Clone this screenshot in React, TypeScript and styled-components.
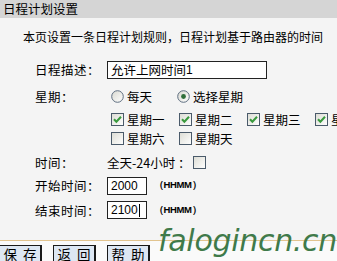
import React from "react";
import styled, { createGlobalStyle } from "styled-components";

const GlobalStyle = createGlobalStyle`
  html, body {
    margin: 0;
    padding: 0;
    background: #f4f4f4;
  }
  body {
    font-family: "Noto Sans CJK SC", "DejaVu Sans", sans-serif;
    color: #000;
  }
`;

const Page = styled.div`
  position: relative;
  width: 337px;
  height: 261px;
  overflow: hidden;
  background: #f4f4f4;
`;

const Header = styled.div`
  height: 18px;
  line-height: 17px;
  padding-left: 3px;
  background: #d5d5d5;
  font-size: 12.5px;
`;

const Intro = styled.div`
  height: 38px;
  line-height: 38px;
  padding-left: 23px;
  font-size: 12px;
  white-space: nowrap;
`;

const Row = styled.div<{ $h: number }>`
  display: grid;
  grid-template-columns: 72px 1fr;
  align-items: center;
  height: ${(p) => p.$h}px;
  padding-left: 35px;
  font-size: 12.5px;
  white-space: nowrap;
`;

const Label = styled.span`
  letter-spacing: 0.5px;
`;

const Value = styled.div`
  display: flex;
  align-items: center;
`;

const TextInput = styled.div<{ $w: number }>`
  box-sizing: border-box;
  width: ${(p) => p.$w}px;
  height: 18px;
  border: 1px solid #222;
  background: #fff;
  padding-left: 3px;
  font-size: 12.5px;
  line-height: 16px;
  display: flex;
  align-items: center;
`;

const NumText = styled.span`
  font-family: "Liberation Sans", Arial, sans-serif;
  font-size: 12px;
`;

const Caret = styled.span`
  display: inline-block;
  width: 1px;
  height: 13px;
  background: #000;
  margin-left: 1px;
`;

const Hint = styled.span`
  margin-left: 7px;
  font-family: "Liberation Sans", Arial, sans-serif;
  font-size: 9.5px;
  font-weight: bold;
  letter-spacing: -0.4px;
`;

const RadioItem = styled.label<{ $w: number }>`
  display: flex;
  align-items: center;
  width: ${(p) => p.$w}px;
  gap: 3px;
`;

const CheckGrid = styled.div`
  display: grid;
  grid-template-columns: repeat(5, 68px);
  margin-left: 4px;
`;

const CheckItem = styled.label`
  display: flex;
  align-items: center;
  gap: 3px;
`;

const Footer = styled.div`
  margin-top: 14px;
  border-top: 1px solid #e2c48f;
  background: #fafafa;
  height: 30px;
  display: flex;
  gap: 11px;
  padding-top: 4px;
  margin-left: -1px;
`;

const Button = styled.div`
  box-sizing: border-box;
  width: 43px;
  height: 19px;
  border: 1px solid #1a1a1a;
  border-right-width: 2px;
  border-bottom-width: 2px;
  background: #dde7f3;
  font-size: 13.5px;
  line-height: 16px;
  display: flex;
  align-items: center;
  justify-content: center;
  gap: 6px;
`;

const Watermark = styled.div`
  position: absolute;
  right: 0px;
  bottom: 3px;
  font-family: "DejaVu Sans", sans-serif;
  font-weight: 200;
  font-style: italic;
  font-size: 30px;
  letter-spacing: -0.3px;
  color: #3f7a4a;
`;

const Radio: React.FC<{ checked?: boolean }> = ({ checked }) => (
  <svg width="13" height="13" viewBox="0 0 13 13">
    <defs>
      <linearGradient id="rg" x1="0" y1="0" x2="1" y2="1">
        <stop offset="0" stopColor="#d8d8d0" />
        <stop offset="1" stopColor="#ffffff" />
      </linearGradient>
    </defs>
    <circle cx="6.5" cy="6.5" r="5.8" fill="url(#rg)" stroke="#5e6e80" strokeWidth="1" />
    {checked && <circle cx="6.5" cy="6.5" r="2.4" fill="#2f6e3a" />}
  </svg>
);

const Check: React.FC<{ checked?: boolean }> = ({ checked }) => (
  <svg width="13" height="13" viewBox="0 0 13 13">
    <defs>
      <linearGradient id="cg" x1="0" y1="0" x2="1" y2="1">
        <stop offset="0" stopColor="#dcdcd4" />
        <stop offset="1" stopColor="#ffffff" />
      </linearGradient>
    </defs>
    <rect x="0.5" y="0.5" width="12" height="12" fill="url(#cg)" stroke="#4a5a6a" strokeWidth="1" />
    {checked && (
      <path d="M3 6.2 L5.4 8.8 L10 3.8" fill="none" stroke="#3a9a3e" strokeWidth="2" />
    )}
  </svg>
);

const days1 = ["星期一", "星期二", "星期三", "星期四", "星期五"];
const days2 = ["星期六", "星期天"];

export default function App() {
  return (
    <Page>
      <GlobalStyle />
      <Header>日程计划设置</Header>
      <Intro>本页设置一条日程计划规则，日程计划基于路由器的时间</Intro>

      <Row $h={27}>
        <Label>日程描述：</Label>
        <Value>
          <TextInput $w={160}>
            允许上网时间<NumText>1</NumText>
          </TextInput>
        </Value>
      </Row>

      <Row $h={26}>
        <Label>星期：</Label>
        <Value>
          <RadioItem $w={66} style={{ marginLeft: 4 }}>
            <Radio />
            每天
          </RadioItem>
          <RadioItem $w={100}>
            <Radio checked />
            选择星期
          </RadioItem>
        </Value>
      </Row>

      <Row $h={20}>
        <span />
        <CheckGrid>
          {days1.map((d) => (
            <CheckItem key={d}>
              <Check checked />
              {d}
            </CheckItem>
          ))}
        </CheckGrid>
      </Row>

      <Row $h={19}>
        <span />
        <CheckGrid>
          {days2.map((d) => (
            <CheckItem key={d}>
              <Check />
              {d}
            </CheckItem>
          ))}
        </CheckGrid>
      </Row>

      <Row $h={28}>
        <Label>时间：</Label>
        <Value>
          全天-24小时 ：&nbsp;
          <Check />
        </Value>
      </Row>

      <Row $h={18}>
        <Label>开始时间：</Label>
        <Value>
          <TextInput $w={40}>
            <NumText>2000</NumText>
          </TextInput>
          <Hint>（HHMM）</Hint>
        </Value>
      </Row>

      <Row $h={32}>
        <Label>结束时间：</Label>
        <Value>
          <TextInput $w={40}>
            <NumText>2100</NumText>
            <Caret />
          </TextInput>
          <Hint>（HHMM）</Hint>
        </Value>
      </Row>

      <Footer>
        <Button>
          <span>保</span>
          <span>存</span>
        </Button>
        <Button>
          <span>返</span>
          <span>回</span>
        </Button>
        <Button>
          <span>帮</span>
          <span>助</span>
        </Button>
      </Footer>

      <Watermark>falogincn.cn</Watermark>
    </Page>
  );
}
